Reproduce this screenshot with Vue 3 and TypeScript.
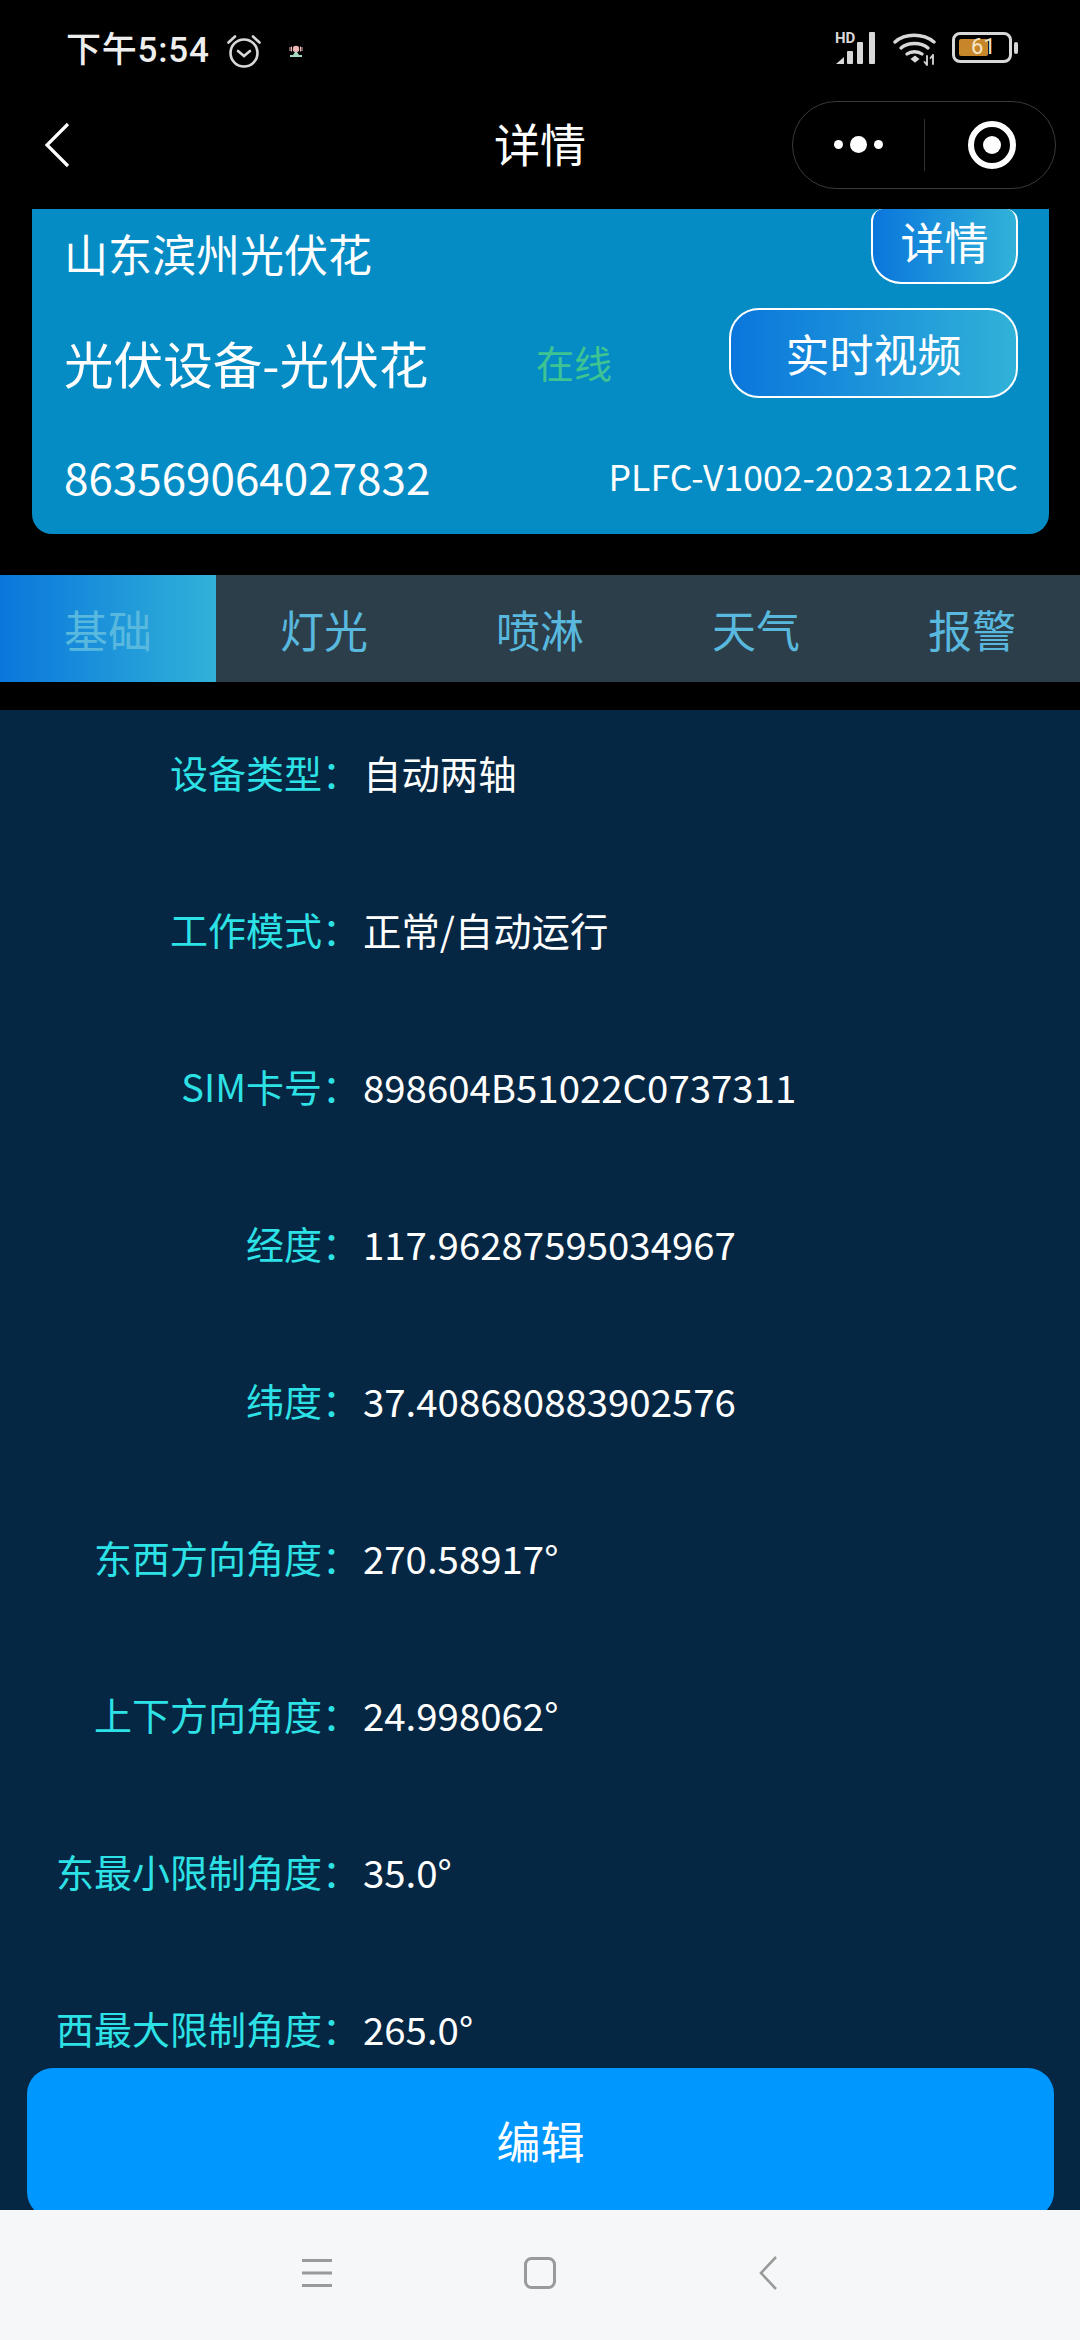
<template>
  <div class="page">
    <div class="statusbar">
      <div class="status-left">
        <span class="time">下午5:54</span>
        <svg class="alarm" width="36" height="36" viewBox="0 0 36 36" fill="none" stroke="#d8d8d8" stroke-width="2.6" stroke-linecap="round">
          <circle cx="18" cy="20" r="13.5" />
          <path d="M12 18l6 5 6-5" />
          <path d="M2.5 9.5L9 3.5M33.5 9.5L27 3.5" />
        </svg>
        <svg class="notify" width="14" height="14" viewBox="0 0 14 14">
          <circle cx="7" cy="5" r="3.2" fill="#eeb7b7" />
          <path d="M1 3v4M2.5 2.5v5M13 3v4M11.5 2.500v5" stroke="#eeb7b7" stroke-width="1" />
          <rect x="1" y="11" width="12" height="2" fill="#a8d8c0" />
          <path d="M6 8h2l2 3H4z" fill="#a8d8c0" />
        </svg>
      </div>
      <div class="status-right">
        <div class="signal">
          <span class="hd">HD</span>
          <svg width="42" height="32" viewBox="0 0 42 32" fill="#d8d8d8">
            <path d="M1 32l8-7v7z" />
            <rect x="12" y="19" width="6" height="13" rx="1" />
            <rect x="22" y="10" width="6" height="22" rx="1" />
            <rect x="34" y="0" width="6" height="32" rx="1" />
          </svg>
        </div>
        <svg class="wifi" width="44" height="36" viewBox="0 0 44 36" fill="none" stroke="#d8d8d8" stroke-width="3.400" stroke-linecap="round">
          <path d="M2 11C12 2 30 2 41 11" />
          <path d="M8 17C15 11 28 11 35 17" />
          <path d="M14 23C18 20 25 20 29 23" />
          <path d="M17.500 28l4.500-3.500 4.500 3.500-4.500 3.800z" fill="#d8d8d8" stroke="none" />
          <path d="M34 25v9M31.500 31l2.500 3M40 24v9M37.500 27l2.500-3" stroke-width="1.800" />
        </svg>
        <div class="battery">
          <div class="battery-body">
            <div class="battery-fill" />
            <span class="battery-num">61</span>
          </div>
          <div class="battery-nub" />
        </div>
      </div>
    </div>

    <div class="navbar">
      <svg class="back" width="26" height="46" viewBox="0 0 26 46" fill="none" stroke="#fff" stroke-width="3.200">
        <path d="M24 2L3 23l21 21" />
      </svg>
      <span class="title">详情</span>
      <div class="capsule">
        <div class="dots">
          <i class="dot" />
          <i class="dot big" />
          <i class="dot" />
        </div>
        <div class="divider" />
        <div class="target"><i /></div>
      </div>
    </div>

    <div class="card">
      <div class="card-row first">
        <span class="place">山东滨州光伏花</span>
        <div class="grad-btn small">详情</div>
      </div>
      <div class="card-row second">
        <span class="device">光伏设备-光伏花</span>
        <span class="online">在线</span>
        <div class="grad-btn video">实时视频</div>
      </div>
      <div class="card-row third">
        <span class="imei">863569064027832</span>
        <span class="version">PLFC-V1002-20231221RC</span>
      </div>
    </div>

    <div class="tabs">
      <div
        v-for="(t, i) in tabs"
        :key="t"
        class="tab"
        :class="{ active: i === activeTab }"
      >
        {{ t }}
      </div>
    </div>

    <div class="content">
      <div class="rows">
        <div v-for="r in rows" :key="r.label" class="row">
          <span class="label">{{ r.label }}：</span>
          <span class="value">{{ r.value }}</span>
        </div>
      </div>
      <div class="edit">编辑</div>
    </div>

    <div class="sysnav">
      <svg width="30" height="30" viewBox="0 0 30 30" stroke="#9a9a9a" stroke-width="3">
        <path d="M0 2.500h30M0 15h30M0 27.500h30" />
      </svg>
      <svg width="32" height="32" viewBox="0 0 32 32" fill="none" stroke="#9a9a9a" stroke-width="3">
        <rect x="1.500" y="1.500" width="29" height="29" rx="6" />
      </svg>
      <svg width="20" height="34" viewBox="0 0 20 34" fill="none" stroke="#9a9a9a" stroke-width="2.600">
        <path d="M18 1L3 17l15 16" />
      </svg>
    </div>
  </div>
</template>

<script setup lang="ts">
const tabs = ['基础', '灯光', '喷淋', '天气', '报警'];
const activeTab = 0;

const rows = [
  { label: '设备类型', value: '自动两轴' },
  { label: '工作模式', value: '正常/自动运行' },
  { label: 'SIM卡号', value: '898604B51022C0737311' },
  { label: '经度', value: '117.96287595034967' },
  { label: '纬度', value: '37.408680883902576' },
  { label: '东西方向角度', value: '270.58917°' },
  { label: '上下方向角度', value: '24.998062°' },
  { label: '东最小限制角度', value: '35.0°' },
  { label: '西最大限制角度', value: '265.0°' },
];
</script>

<style scoped>
.page {
  width: 1080px;
  height: 2340px;
  background: #000;
  color: #fff;
  display: flex;
  flex-direction: column;
  overflow: hidden;
  font-family: "Noto Sans CJK SC", "Noto Sans", sans-serif;
}

.statusbar {
  height: 88px;
  padding: 26px 62px 0 66px;
  box-sizing: border-box;
  display: flex;
  justify-content: space-between;
  align-items: flex-start;
}
.status-left { display: flex; align-items: center; }
.time { font-family: Roboto, "Noto Sans CJK SC", sans-serif; font-size: 35px; line-height: 50px; font-weight: 500; color: #eee; letter-spacing: .8px; }
.alarm { margin-left: 16px; }
.notify { margin-left: 27px; }
.status-right { display: flex; align-items: flex-start; margin-top: 6px; }
.signal { position: relative; width: 42px; height: 32px; margin-right: 16px; }
.signal svg { display: block; }
.hd { position: absolute; left: 0; top: -2px; font-family: Roboto, sans-serif; font-size: 15px; line-height: 16px; font-weight: 700; color: #d8d8d8; }
.wifi { margin-top: -1px; margin-right: 15px; }
.battery { display: flex; align-items: center; }
.battery-body { position: relative; width: 60px; height: 31px; box-sizing: border-box; border: 3px solid #d8d8d8; border-radius: 8px; }
.battery-fill { position: absolute; left: 4px; top: 4px; bottom: 4px; width: 29px; background: #c8862a; border-radius: 2px; }
.battery-num { position: absolute; left: 16px; top: -1px; font-family: Roboto, sans-serif; font-size: 22px; line-height: 26px; color: #f6e7c8; }
.battery-nub { width: 4px; height: 12px; margin-left: 2px; background: #d8d8d8; border-radius: 2px; }

.navbar {
  height: 121px;
  position: relative;
  display: flex;
  align-items: center;
  padding: 0 24px 8px 44px;
  box-sizing: border-box;
}
.title {
  position: absolute;
  left: 0;
  right: 0;
  top: 24px;
  text-align: center;
  font-size: 46px;
  line-height: 60px;
}
.capsule {
  margin-left: auto;
  width: 264px;
  height: 88px;
  box-sizing: border-box;
  border: 1px solid #3a3a3a;
  border-radius: 44px;
  display: flex;
  align-items: center;
}
.dots { width: 131px; display: flex; justify-content: center; align-items: center; gap: 7px; }
.dot { width: 9px; height: 9px; border-radius: 50%; background: #fff; }
.dot.big { width: 17px; height: 17px; }
.divider { width: 1px; height: 52px; background: #333; }
.target {
  width: 48px;
  height: 48px;
  margin-left: 43px;
  box-sizing: border-box;
  border: 6px solid #fff;
  border-radius: 50%;
  display: flex;
  align-items: center;
  justify-content: center;
}
.target i { width: 18px; height: 18px; border-radius: 50%; background: #fff; }

.card {
  margin: 0 31px 0 32px;
  height: 325px;
  padding: 0 31px 0 32px;
  box-sizing: border-box;
  background: #058cc4;
  border-radius: 0 0 20px 20px;
  overflow: hidden;
}
.card-row { display: flex; align-items: center; }
.card-row.first { height: 75px; justify-content: space-between; align-items: flex-start; }
.card-row.second { height: 90px; margin-top: 24px; }
.card-row.third { justify-content: space-between; margin-top: 48px; height: 60px; }
.place { font-size: 44px; line-height: 60px; margin-top: 14px; }
.device { font-size: 49.6px; line-height: 70px; width: 472px; margin-top: 18px; }
.online { font-size: 38px; line-height: 50px; color: #3ec492; margin-top: 18px; }
.imei { font-size: 44px; line-height: 60px; }
.version { font-size: 35.6px; line-height: 60px; }
.grad-btn {
  box-sizing: border-box;
  border: 2px solid #fff;
  background: linear-gradient(90deg, #0a76dc, #30b2d8);
  display: flex;
  align-items: center;
  justify-content: center;
  font-size: 44px;
}
.grad-btn.small { width: 147px; height: 75px; padding-bottom: 10px; border-top: 0; border-radius: 12px 12px 30px 30px; }
.grad-btn.video { width: 289px; height: 90px; margin-left: auto; border-radius: 30px; }

.tabs {
  margin-top: 41px;
  height: 107px;
  display: flex;
  background: #2c3e4a;
}
.tab {
  width: 216px;
  display: flex;
  align-items: center;
  justify-content: center;
  font-size: 44px;
  color: #58b8de;
}
.tab.active { background: linear-gradient(90deg, #0a76dc, #30b2d8); }

.content {
  margin-top: 28px;
  flex: 1;
  min-height: 0;
  position: relative;
  overflow: hidden;
  background: #062743;
}
.rows {
  padding-top: 37px;
  display: flex;
  flex-direction: column;
  gap: 107px;
}
.row { display: flex; font-size: 38.4px; line-height: 50px; }
.label { width: 360px; font-size: 38px; text-align: right; color: #2de2e6; white-space: nowrap; }
.value { margin-left: 3px; }
.edit {
  position: absolute;
  left: 27px;
  right: 26px;
  top: 1358px;
  height: 150px;
  border-radius: 26px;
  background: #0097fe;
  display: flex;
  align-items: flex-start;
  justify-content: center;
  padding-top: 42px;
  box-sizing: border-box;
  font-size: 44px;
  line-height: 60px;
}

.sysnav {
  height: 130px;
  flex-shrink: 0;
  background: #f6f7f8;
  display: flex;
  align-items: center;
  justify-content: center;
  padding-bottom: 4px;
  box-sizing: border-box;
}
.sysnav svg:nth-child(1) { margin-right: 192px; }
.sysnav svg:nth-child(3) { margin-left: 202px; }
</style>
